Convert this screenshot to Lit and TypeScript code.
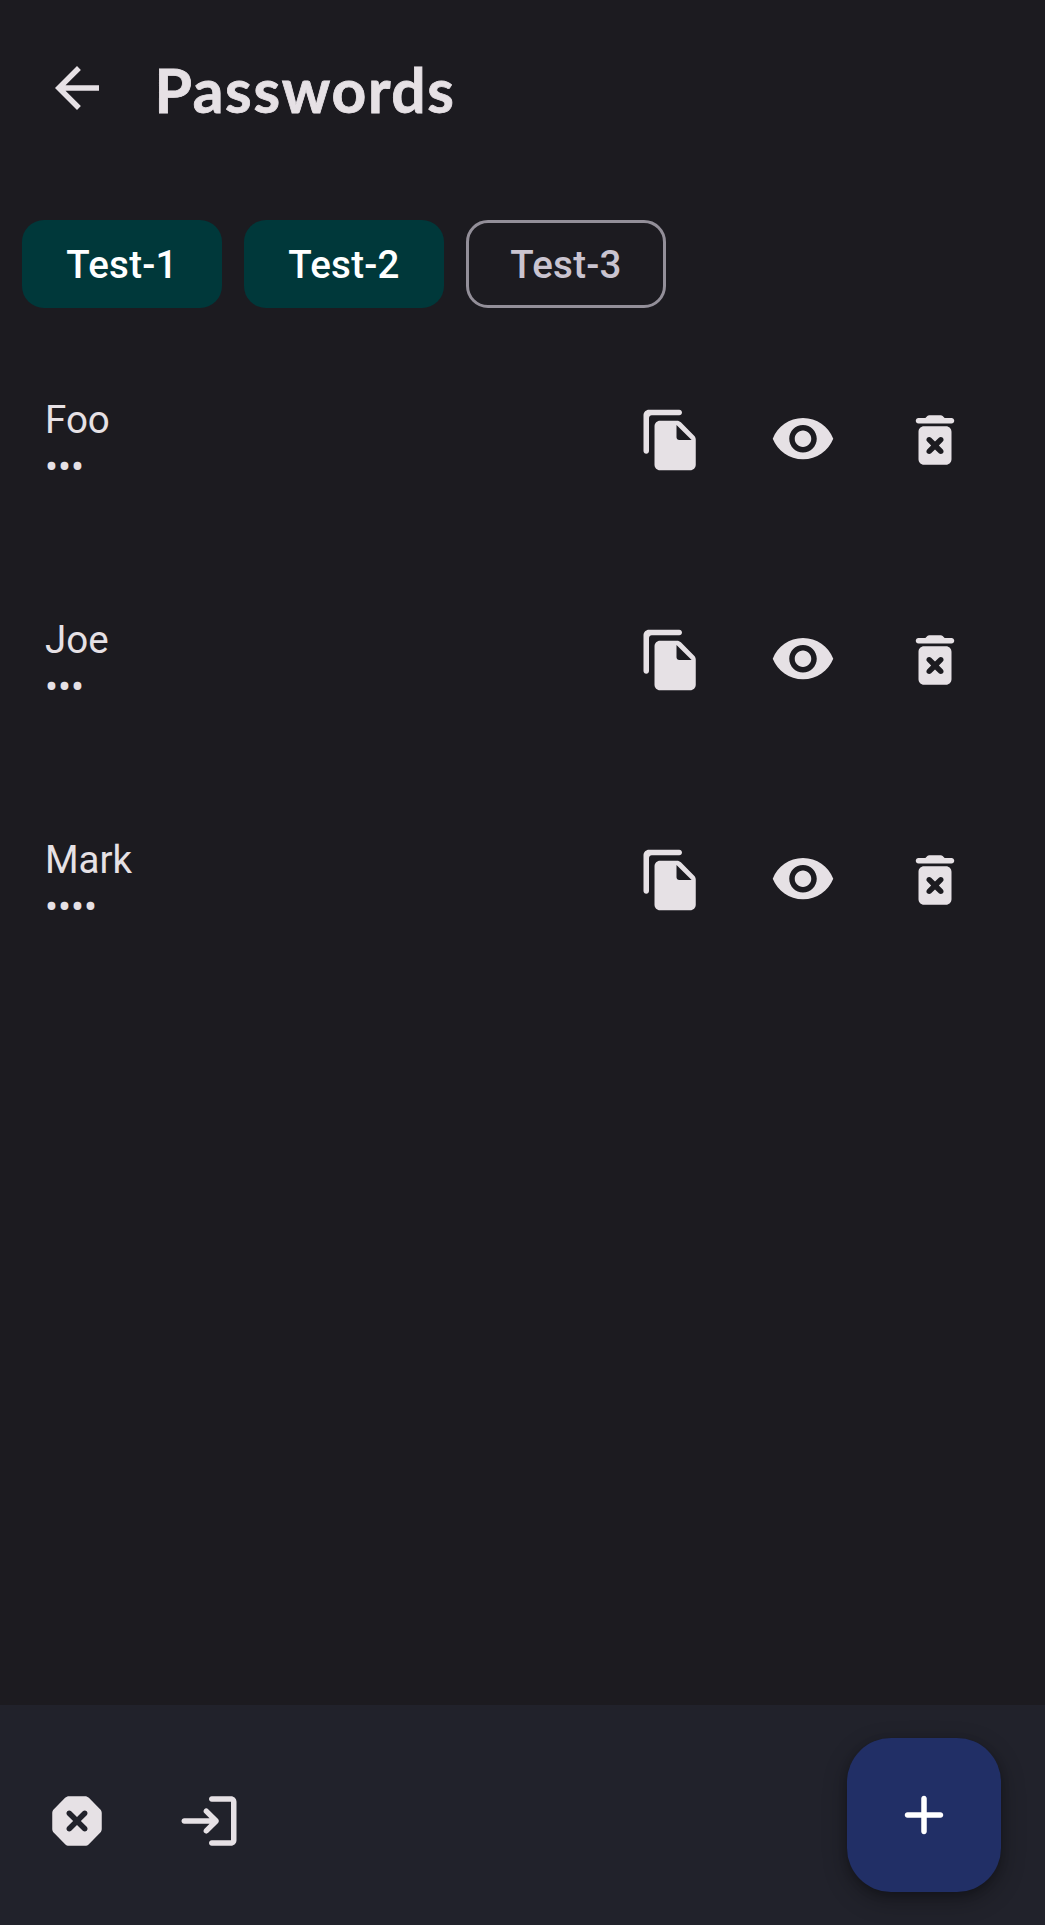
import { css, html, LitElement, svg } from 'lit';
import { customElement, state } from 'lit/decorators.js';
import { map } from 'lit/directives/map.js';

interface Credential {
  name: string;
  password: string;
}

// Material Icons Round paths, 24x24 grid
const ICONS = {
  back: 'M20 11H7.83l5.59-5.59L12 4l-8 8 8 8 1.41-1.41L7.83 13H20v-2z',
  copy: 'M15 1H4c-1.1 0-2 .9-2 2v13c0 .55.45 1 1 1s1-.45 1-1V4c0-.55.45-1 1-1h10c.55 0 1-.45 1-1s-.45-1-1-1zm.59 4.59l4.83 4.83c.37.37.58.88.58 1.41V21c0 1.1-.9 2-2 2H7.99C6.89 23 6 22.1 6 21l.01-14c0-1.1.89-2 1.99-2h6.17c.53 0 1.04.21 1.42.59zM15 12h4.5L14 6.5V11c0 .55.45 1 1 1z',
  eye: 'M12 4C7 4 2.73 7.11 1 11.5 2.73 15.89 7 19 12 19s9.27-3.11 11-7.5C21.27 7.11 17 4 12 4zm0 12.5c-2.76 0-5-2.24-5-5s2.24-5 5-5 5 2.24 5 5-2.24 5-5 5zm0-8c-1.66 0-3 1.34-3 3s1.34 3 3 3 3-1.34 3-3-1.34-3-3-3z',
  trash: 'M6 19c0 1.1.9 2 2 2h8c1.1 0 2-.9 2-2V9c0-1.1-.9-2-2-2H8c-1.1 0-2 .9-2 2v10zm3.17-7.83c.39-.39 1.02-.39 1.41 0L12 12.59l1.42-1.42c.39-.39 1.02-.39 1.41 0 .39.39.39 1.02 0 1.41L13.41 14l1.42 1.42c.39.39.39 1.02 0 1.41-.39.39-1.02.39-1.41 0L12 15.41l-1.42 1.42c-.39.39-1.02.39-1.41 0-.39-.39-.39-1.02 0-1.41L10.59 14l-1.42-1.42c-.39-.38-.39-1.02 0-1.41zM15.5 4l-.71-.71c-.18-.18-.44-.29-.7-.29H9.91c-.26 0-.52.11-.7.29L8.5 4H6c-.55 0-1 .45-1 1s.45 1 1 1h12c.55 0 1-.45 1-1s-.45-1-1-1h-2.5z',
  dangerous: 'M14.9 3H9.1c-.53 0-1.04.21-1.42.59l-4.1 4.1C3.21 8.06 3 8.57 3 9.1v5.8c0 .53.21 1.04.59 1.41l4.1 4.1c.37.38.88.59 1.41.59h5.8c.53 0 1.04-.21 1.41-.59l4.1-4.1c.38-.37.59-.88.59-1.41V9.1c0-.53-.21-1.04-.59-1.41l-4.1-4.1C15.94 3.21 15.43 3 14.9 3zm.64 12.54c-.39.39-1.02.39-1.41 0L12 13.41l-2.12 2.12c-.39.39-1.02.39-1.41 0-.39-.39-.39-1.02 0-1.41L10.59 12 8.46 9.88c-.39-.39-.39-1.02 0-1.41.39-.39 1.02-.39 1.41 0L12 10.59l2.12-2.12c.39-.39 1.02-.39 1.41 0 .39.39.39 1.02 0 1.41L13.41 12l2.12 2.12c.4.39.4 1.03.01 1.42z',
  login: 'M10.3 7.7c-.39.39-.39 1.01 0 1.4l1.9 1.9H3c-.55 0-1 .45-1 1s.45 1 1 1h9.2l-1.9 1.9c-.39.39-.39 1.01 0 1.4.39.39 1.01.39 1.4 0l3.59-3.59c.39-.39.39-1.02 0-1.41L11.7 7.7c-.39-.39-1.01-.39-1.4 0zM20 19h-7c-.55 0-1 .45-1 1s.45 1 1 1h7c1.1 0 2-.9 2-2V5c0-1.1-.9-2-2-2h-7c-.55 0-1 .45-1 1s.45 1 1 1h7v14z',
  add: 'M18 13h-5v5c0 .55-.45 1-1 1s-1-.45-1-1v-5H6c-.55 0-1-.45-1-1s.45-1 1-1h5V6c0-.55.45-1 1-1s1 .45 1 1v5h5c.55 0 1 .45 1 1s-.45 1-1 1z',
};

const icon = (name: keyof typeof ICONS) => html`
  <svg class="icon" viewBox="0 0 24 24" fill="currentColor">${svg`<path d=${ICONS[name]}></path>`}</svg>
`;

@customElement('app-root')
export class AppRoot extends LitElement {
  static override styles = css`
    :host {
      display: flex;
      flex-direction: column;
      height: 100vh;
      background-color: #1c1b20;
      color: #e6e1e5;
      font-family: Roboto, 'Liberation Sans', sans-serif;
    }
    .icon {
      display: block;
      width: 66px;
      height: 66px;
    }
    .icon-btn {
      display: flex;
      align-items: center;
      justify-content: center;
      width: 132px;
      height: 132px;
      flex: none;
    }
    .top-bar {
      display: flex;
      align-items: center;
      height: 176px;
      padding-left: 11px;
      flex: none;
    }
    .title {
      margin: 5px 0 0 11.5px;
      font-family: Lato, sans-serif;
      font-size: 60.5px;
      font-weight: 700;
      line-height: 1;
      letter-spacing: 1.7px;
      -webkit-text-stroke: 0.8px #e6e1e5; /* closer to the heavier rounded face */
    }
    .chips {
      display: flex;
      gap: 22px;
      padding: 44px 22px 22px;
      flex: none;
    }
    .chip {
      display: flex;
      align-items: center;
      justify-content: center;
      box-sizing: border-box;
      width: 200px;
      height: 88px;
      border-radius: 22px;
      background-color: #00383a;
      color: #ffffff;
      font-size: 38.5px;
      font-weight: 500;
      letter-spacing: 0.275px;
    }
    .chip.off {
      background: none;
      border: 3px solid #938f99;
      color: #cac4d0;
    }
    .list {
      flex: 1;
    }
    .row {
      display: flex;
      align-items: center;
      height: 220px;
      padding: 0 44px 0 45px;
    }
    .text {
      flex: 1;
      margin-top: 5px;
      font-size: 38.5px;
      line-height: 47px;
    }
    .text div {
      white-space: nowrap;
    }
    .bottom-bar {
      display: flex;
      align-items: flex-start;
      height: 220px;
      box-sizing: border-box;
      padding: 50px 44px 0 11px;
      background-color: #21222b;
      flex: none;
    }
    .fab {
      display: flex;
      align-items: center;
      justify-content: center;
      width: 154px;
      height: 154px;
      margin: -17px 0 0 auto;
      border-radius: 44px;
      background-color: #212f66;
      color: #ffffff;
      box-shadow: 0 8px 24px rgba(0, 0, 0, 0.3), 0 3px 8px rgba(0, 0, 0, 0.2);
    }
  `;

  @state()
  private credentials: Credential[] = [
    { name: 'Foo', password: '•••' },
    { name: 'Joe', password: '•••' },
    { name: 'Mark', password: '••••' },
  ];

  override render() {
    return html`
      <div class="top-bar">
        <div class="icon-btn">${icon('back')}</div>
        <div class="title">Passwords</div>
      </div>
      <div class="chips">
        <div class="chip">Test-1</div>
        <div class="chip">Test-2</div>
        <div class="chip off">Test-3</div>
      </div>
      <div class="list">
        ${map(
          this.credentials,
          (item) => html`
            <div class="row">
              <div class="text">
                <div>${item.name}</div>
                <div>${item.password}</div>
              </div>
              <div class="icon-btn">${icon('copy')}</div>
              <div class="icon-btn">${icon('eye')}</div>
              <div class="icon-btn">${icon('trash')}</div>
            </div>
          `
        )}
      </div>
      <div class="bottom-bar">
        <div class="icon-btn">${icon('dangerous')}</div>
        <div class="icon-btn">${icon('login')}</div>
        <div class="fab">${icon('add')}</div>
      </div>
    `;
  }
}

declare global {
  interface HTMLElementTagNameMap {
    'app-root': AppRoot;
  }
}
